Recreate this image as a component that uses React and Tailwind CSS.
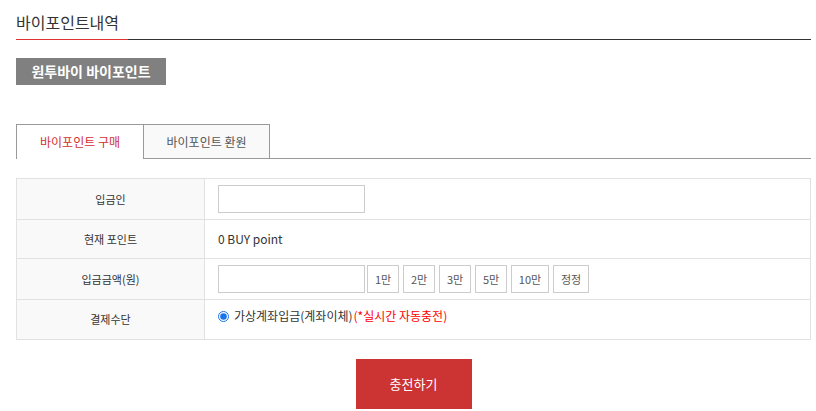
import { useState } from 'react'

const amounts = [
  { label: '1만', w: 'w-[32px]' },
  { label: '2만', w: 'w-[32px]' },
  { label: '3만', w: 'w-[32px]' },
  { label: '5만', w: 'w-[32px]' },
  { label: '10만', w: 'w-[38px]' },
  { label: '정정', w: 'w-[36px]' },
]

function Row({ label, h, children }) {
  return (
    <div className={`flex border-b border-[#e1e1e1] ${h}`}>
      <div className="w-[188px] shrink-0 bg-[#f9f9f9] border-r border-[#e1e1e1] flex items-center justify-center text-[11px] text-[#333]">
        {label}
      </div>
      <div className="flex-1 pl-[13px] flex items-center text-[11px] text-[#333]">{children}</div>
    </div>
  )
}

export default function App() {
  const [tab, setTab] = useState(0)

  return (
    <div className="bg-white min-h-[411px] pl-4 pr-[5px] font-['Noto_Sans_CJK_KR','Noto_Sans',sans-serif]">
      {/* Title */}
      <div className="pt-[10px] h-[39px] text-[16px] leading-[24px] text-[#333]">바이포인트내역</div>
      <div className="flex h-px">
        <div className="w-[112px] bg-[#dd3333]" />
        <div className="flex-1 bg-[#333]" />
      </div>

      {/* Badge */}
      <div className="mt-[18px] w-[150px] h-[27px] bg-[#808080] text-white text-[14px] font-bold flex items-center justify-center">
        원투바이 바이포인트
      </div>

      {/* Tabs */}
      <div className="mt-[39px] flex items-end border-b border-[#999]">
        {['바이포인트 구매', '바이포인트 환원'].map((t, i) => (
          <button
            key={t}
            onClick={() => setTab(i)}
            className={
              i === tab
                ? 'w-[128px] h-[35px] -mb-px bg-white border border-b-0 border-[#999] text-[12px] text-[#d32f2f]'
                : 'w-[126px] h-[35px] -mb-px bg-[#f9f9f9] border border-l-0 border-[#999] text-[12px] text-[#555]'
            }
          >
            {t}
          </button>
        ))}
      </div>

      {/* Form table */}
      <div className="mt-[19px] border-t border-l border-r border-[#e1e1e1]">
        <Row label="입금인" h="h-[41px]">
          <input className="w-[147px] h-[28px] border border-[#ccc] outline-none px-2" />
        </Row>
        <Row label="현재 포인트" h="h-[39px]">
          <span className="text-[12px]">0 BUY point</span>
        </Row>
        <Row label="입금금액(원)" h="h-[41px]">
          <input className="w-[147px] h-[28px] border border-[#ccc] outline-none px-2" />
          <div className="ml-[2px] flex gap-1">
            {amounts.map((a) => (
              <button key={a.label} className={`${a.w} h-[28px] border border-[#ccc] bg-white text-[11px] text-[#555]`}>
                {a.label}
              </button>
            ))}
          </div>
        </Row>
        <Row label="결제수단" h="h-[40px] items-stretch">
          <div className="self-start pt-[7px] flex items-center text-[12px]">
            <input type="radio" defaultChecked className="m-0 w-[11px] h-[11px] accent-[#1a73e8]" />
            <span className="ml-[5px]">가상계좌입금(계좌이체)</span>
            <span className="ml-[1px] text-[#f00]">(*실시간 자동충전)</span>
          </div>
        </Row>
      </div>

      {/* Submit */}
      <div className="mt-[19px] flex justify-center">
        <button className="w-[116px] h-[50px] bg-[#cc3333] text-white text-[13px]">충전하기</button>
      </div>
    </div>
  )
}
